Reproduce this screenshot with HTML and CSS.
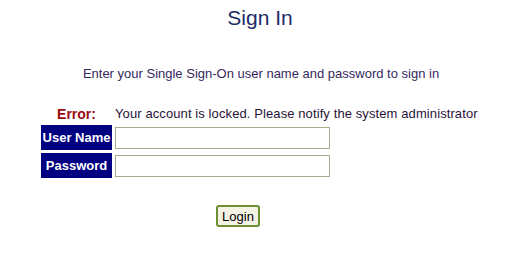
FILE: index.html
```html
<!DOCTYPE html>
<html>
<head>
<meta charset="utf-8">
<link rel="stylesheet" href="styles.css">
</head>
<body>
<div class="page">
  <h1 class="title">Sign In</h1>
  <p class="intro">Enter your Single Sign-On user name and password to sign in</p>
  <div class="form">
    <div class="err-label">Error:</div>
    <div class="err-msg">Your account is locked. Please notify the system administrator</div>
    <div class="label">User Name</div>
    <div class="field"><input class="input" type="text"></div>
    <div class="label">Password</div>
    <div class="field"><input class="input" type="password"></div>
  </div>
  <div class="actions"><button class="btn" type="button">Login</button></div>
</div>
</body>
</html>
```
FILE: styles.css
```css
html, body {
  margin: 0;
  padding: 0;
  background: #ffffff;
}
body {
  font-family: "Liberation Sans", Arial, sans-serif;
  width: 506px;
  height: 262px;
  overflow: hidden;
}
.page {
  padding-top: 6px;
}
.title {
  margin: 0;
  text-align: center;
  font-size: 21px;
  font-weight: normal;
  color: #1c2c66;
  line-height: 23px;
  padding-left: 14px;
}
.intro {
  margin: 37px 0 0 0;
  text-align: center;
  font-size: 13px;
  line-height: 15px;
  color: #36285e;
  padding-left: 16px;
}
.form {
  margin: 25px 0 0 41px;
  display: grid;
  grid-template-columns: 71px auto;
  column-gap: 3px;
  row-gap: 3px;
  align-items: center;
}
.err-label {
  text-align: center;
  font-size: 14px;
  font-weight: bold;
  color: #9c0a14;
  line-height: 16px;
}
.err-msg {
  font-size: 13px;
  line-height: 16px;
  letter-spacing: 0.1px;
  color: #2a1236;
}
.label {
  background: #000080;
  color: #ffffff;
  font-size: 13px;
  font-weight: bold;
  height: 25px;
  line-height: 25px;
  text-align: center;
  white-space: nowrap;
}
.field {
  display: flex;
  align-items: center;
}
.input {
  box-sizing: border-box;
  width: 215px;
  height: 22px;
  margin: 0;
  padding: 0 2px;
  border: 1px solid #a7ab8c;
  background: #ffffff;
  font: 13px "Liberation Sans", Arial, sans-serif;
}
.actions {
  margin: 27px 0 0 216px;
}
.btn {
  box-sizing: border-box;
  width: 44px;
  height: 22px;
  padding: 0;
  border: 2px solid #6c8f2f;
  border-radius: 3px;
  background: #f4f2e4;
  font: 13px "Liberation Sans", Arial, sans-serif;
  color: #000000;
}
```
